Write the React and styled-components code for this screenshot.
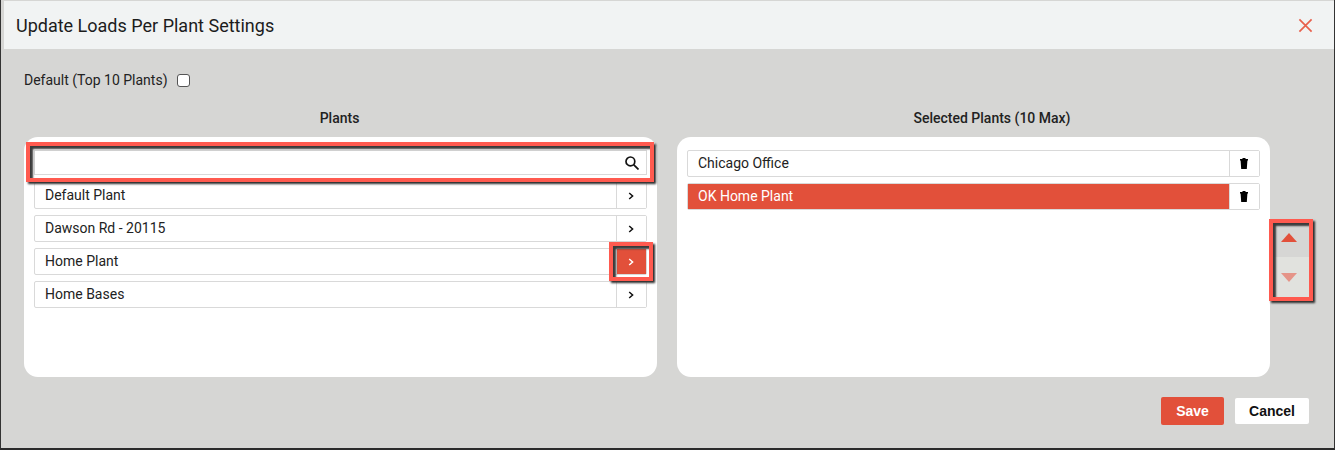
import React from "react";
import styled, { createGlobalStyle } from "styled-components";

const Global = createGlobalStyle`
  html, body { margin: 0; padding: 0; background: #d6d6d4; }
  body { font-family: Roboto, "Liberation Sans", sans-serif; color: #1a1a1a; }
`;

const Dialog = styled.div`
  box-sizing: border-box;
  width: 1335px;
  height: 450px;
  display: flex;
  flex-direction: column;
  background: #d6d6d4;
  border-left: 1px solid #333;
  border-right: 1px solid #333;
  border-bottom: 2px solid #2b2b2b;
  padding-top: 1px;
`;

const Header = styled.div`
  height: 48px;
  margin-left: 3px;
  padding: 0 21px 0 12px;
  display: flex;
  align-items: center;
  justify-content: space-between;
  background: #f1f3f3;
  font-size: 18px;
  color: #1c1c1c;
`;

const CloseIcon = styled.svg`
  width: 15px;
  height: 15px;
  stroke: #e8604c;
  stroke-width: 1.8;
  fill: none;
`;

const Body = styled.div`
  flex: 1;
  display: flex;
  flex-direction: column;
  padding: 0 25px 0 23px;
`;

const DefaultRow = styled.label`
  height: 20px;
  margin-top: 21px;
  display: flex;
  align-items: center;
  gap: 9px;
  font-size: 14px;
  color: #222;
`;

const Check = styled.span`
  box-sizing: border-box;
  width: 13px;
  height: 13px;
  background: #fff;
  border: 1px solid #555;
  border-radius: 3px;
`;

const Columns = styled.div`
  margin-top: 19px;
  display: flex;
  align-items: flex-start;
  gap: 20px;
`;

const Column = styled.div`
  width: ${(p) => p.$width}px;
  flex: none;
`;

const ColumnTitle = styled.div`
  height: 18px;
  margin-bottom: 10px;
  padding-right: 2px;
  text-align: center;
  font-size: 14px;
  font-weight: 500;
  line-height: 18px;
  color: #222;
`;

const Panel = styled.div`
  box-sizing: border-box;
  height: 240px;
  padding: 13px 10px;
  display: flex;
  flex-direction: column;
  gap: 6px;
  background: #fff;
  border-radius: 14px;
`;

const LeftPanel = styled(Panel)`
  gap: 7px;
`;

const RightPanel = styled(Panel)`
  width: 593px;
  flex: none;
`;

const PanelWithSorter = styled.div`
  display: flex;
  align-items: flex-start;
`;

const Rows = styled.div`
  display: flex;
  flex-direction: column;
  gap: 6px;
`;

const Highlighted = styled.div`
  position: relative;
  display: flex;
  flex-direction: column;
`;

const Frame = styled.div`
  position: absolute;
  inset: ${(p) => p.$inset};
  border: 4px solid #ff5a4f;
  box-shadow: 2px 2px 2px #2a2a2a, inset 3px 3px 2px #3a3a3a;
  pointer-events: none;
`;

const SearchBox = styled.div`
  box-sizing: border-box;
  height: 25px;
  padding-right: 7px;
  display: flex;
  align-items: center;
  justify-content: flex-end;
  background: #fff;
  border: 1px solid #d9d9d9;
`;

const SearchIcon = styled.svg`
  width: 14px;
  height: 14px;
  stroke: #111;
  stroke-width: 1.7;
  fill: none;
`;

const Row = styled.div`
  box-sizing: border-box;
  height: 27px;
  display: flex;
  align-items: stretch;
  background: #fff;
  border: 1px solid #d9d9d9;
  border-radius: 2px;
`;

const RowLabel = styled.div`
  flex: 1;
  display: flex;
  align-items: center;
  padding: 0 0 2px 10px;
  font-size: 14px;
  color: ${(p) => (p.$selected ? "#fff" : "#222")};
  background: ${(p) => (p.$selected ? "#e2503a" : "transparent")};
`;

const RowButton = styled.div`
  box-sizing: border-box;
  width: 30px;
  padding-right: 2px;
  flex: none;
  display: flex;
  align-items: center;
  justify-content: center;
  border-left: 1px solid #d9d9d9;
  background: ${(p) => (p.$active ? "#e2503a" : "#fff")};
  color: ${(p) => (p.$active ? "#fff" : "#111")};
`;

const ActiveButton = styled(RowButton)`
  flex: 1;
`;

const Chevron = styled.svg`
  width: 8px;
  height: 8px;
  stroke: currentColor;
  stroke-width: 1.5;
  fill: none;
`;

const TrashIcon = styled.svg`
  width: 8px;
  height: 11px;
  fill: #000;
`;

const Sorter = styled.div`
  position: relative;
  width: 39px;
  margin-top: 80px;
  flex: none;
  display: flex;
  flex-direction: column;
`;

const SortButton = styled.div`
  height: 40px;
  padding-right: 1px;
  display: flex;
  align-items: center;
  justify-content: center;
  background: ${(p) => (p.$up ? "#d6d6d4" : "#e1e2de")};
`;

const Triangle = styled.span`
  width: 0;
  height: 0;
  border-left: 8px solid transparent;
  border-right: 8px solid transparent;
  border-bottom: ${(p) => (p.$up ? "9px solid #e2503a" : "none")};
  border-top: ${(p) => (p.$up ? "none" : "9px solid #e59488")};
`;

const Footer = styled.div`
  margin-top: 20px;
  display: flex;
  justify-content: flex-end;
  align-items: center;
  gap: 11px;
`;

const Button = styled.div`
  box-sizing: border-box;
  width: ${(p) => p.$width}px;
  height: ${(p) => (p.$primary ? 28 : 26)}px;
  display: flex;
  align-items: center;
  justify-content: center;
  border-radius: 2px;
  font-family: "Liberation Sans", Arial, sans-serif;
  font-size: 14px;
  font-weight: 700;
  color: ${(p) => (p.$primary ? "#fff" : "#111")};
  background: ${(p) => (p.$primary ? "#e2503a" : "#fff")};
`;

const plants = ["Default Plant", "Dawson Rd - 20115", "Home Plant", "Home Bases"];

const Arrow = () => (
  <Chevron viewBox="0 0 8 8">
    <path d="M2.2 1 L5.6 4 L2.2 7" />
  </Chevron>
);

const Trash = () => (
  <RowButton>
    <TrashIcon viewBox="0 0 8 11">
      <path d="M2.5 0 H5.5 V1 H8 V2.6 H0 V1 H2.5 Z M0.6 2.6 H7.4 L6.8 11 H1.2 Z" />
    </TrashIcon>
  </RowButton>
);

const PlantRow = ({ name }) => {
  const active = name === "Home Plant";
  return (
    <Row>
      <RowLabel>{name}</RowLabel>
      {active ? (
        <Highlighted>
          <ActiveButton $active>
            <Arrow />
          </ActiveButton>
          <Frame $inset="-7px" />
        </Highlighted>
      ) : (
        <RowButton>
          <Arrow />
        </RowButton>
      )}
    </Row>
  );
};

export default function App() {
  return (
    <Dialog>
      <Global />
      <Header>
        Update Loads Per Plant Settings
        <CloseIcon viewBox="0 0 16 16">
          <path d="M1.5 1.5 L14.5 14.5 M14.5 1.5 L1.5 14.5" />
        </CloseIcon>
      </Header>
      <Body>
        <DefaultRow>
          Default (Top 10 Plants)
          <Check />
        </DefaultRow>
        <Columns>
          <Column $width={633}>
            <ColumnTitle>Plants</ColumnTitle>
            <LeftPanel>
              <Highlighted>
                <SearchBox>
                  <SearchIcon viewBox="0 0 14 14">
                    <circle cx="5.4" cy="5.4" r="4.4" />
                    <path d="M8.6 8.6 L13.5 13.5" />
                  </SearchIcon>
                </SearchBox>
                <Frame $inset="-8px -7px -7px -8px" />
              </Highlighted>
              <Rows>
                {plants.map((p) => (
                  <PlantRow key={p} name={p} />
                ))}
              </Rows>
            </LeftPanel>
          </Column>
          <Column $width={632}>
            <ColumnTitle>Selected Plants (10 Max)</ColumnTitle>
            <PanelWithSorter>
              <RightPanel>
                <Row>
                  <RowLabel>Chicago Office</RowLabel>
                  <Trash />
                </Row>
                <Row>
                  <RowLabel $selected>OK Home Plant</RowLabel>
                  <Trash />
                </Row>
              </RightPanel>
              <Sorter>
                <SortButton $up>
                  <Triangle $up />
                </SortButton>
                <SortButton>
                  <Triangle />
                </SortButton>
                <Frame $inset="2px -4px -4px -1px" />
              </Sorter>
            </PanelWithSorter>
          </Column>
        </Columns>
        <Footer>
          <Button $primary $width={63}>Save</Button>
          <Button $width={74}>Cancel</Button>
        </Footer>
      </Body>
    </Dialog>
  );
}
